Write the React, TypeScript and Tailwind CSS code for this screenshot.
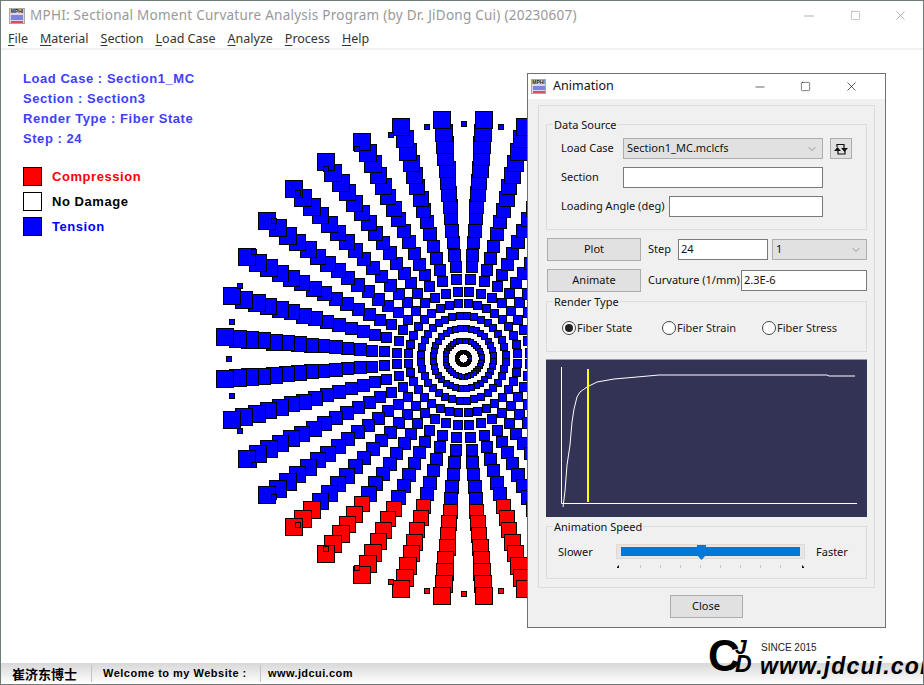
import { ChevronDown, Minus, Square, X } from 'lucide-react';

const CX = 462;
const CY = 357;

// fibers: 36 spokes, 19 rings and a center ring, plus the rebar circle
type Fiber = { x: number; y: number; s: number };

const buildFibers = () => {
  const list: Fiber[] = [];
  for (let a = 0; a < 36; a++) {
    const ang = ((a * 10 + 5) * Math.PI) / 180;
    list.push({ x: CX + 6.5 * Math.cos(ang), y: CY + 6.5 * Math.sin(ang), s: 3 });
  }
  for (let k = 0; k < 19; k++) {
    const r = 18 + 12.28 * k;
    for (let a = 0; a < 36; a++) {
      const ang = ((a * 10 + 5) * Math.PI) / 180;
      list.push({ x: CX + r * Math.cos(ang), y: CY + r * Math.sin(ang), s: 1.13 * Math.sqrt(r) });
    }
  }
  for (let a = 0; a < 40; a++) {
    const ang = (a * 9 * Math.PI) / 180;
    list.push({ x: CX + 235 * Math.cos(ang), y: CY + 235 * Math.sin(ang), s: 4.5 });
  }
  return list;
};

const fibers = buildFibers();

const FiberPlot = () => (
  <svg className="absolute left-0 top-0" width="924" height="685" shapeRendering="crispEdges">
    {fibers.map((f, i) => (
      <rect
        key={i}
        x={Math.round(f.x - f.s / 2) + 0.5}
        y={Math.round(f.y - f.s / 2) + 0.5}
        width={Math.round(f.s)}
        height={Math.round(f.s)}
        fill={f.y > 500 ? '#ff0000' : '#0000ff'}
        stroke="#000"
        strokeWidth="1"
      />
    ))}
  </svg>
);

const AppIcon = ({ size }: { size: 'lg' | 'sm' }) => (
  <div
    className={`flex flex-col items-center border border-[#a8a8a8] bg-[#d8d8e8] ${
      size === 'lg' ? 'h-[16px] w-[16px]' : 'h-[15px] w-[15px]'
    }`}
  >
    <span className="h-[5px] text-[5px] font-bold leading-[5px] text-[#222] [font-family:'Liberation_Sans',sans-serif]">MPHI</span>
    <div className="mt-[1px] h-[5px] w-[12px] bg-[#7a86d8]" />
    <div className="mt-[1px] h-[2px] w-[12px] bg-[#d85060]" />
  </div>
);

const MenuItem = ({ first, rest }: { first: string; rest: string }) => (
  <span>
    <span className="underline underline-offset-2">{first}</span>
    {rest}
  </span>
);

const LegendRow = ({ box, color, label }: { box: string; color: string; label: string }) => (
  <div className="flex h-[25px] items-center gap-[10px]">
    <div className={`h-[19px] w-[19px] border border-black ${box}`} />
    <span className={`text-[13px] font-bold tracking-[0.55px] ${color}`}>{label}</span>
  </div>
);

const Group = ({ title, className, children }: { title: string; className: string; children: React.ReactNode }) => (
  <div className={`relative border border-[#dcdcdc] ${className}`}>
    <span className="absolute left-[6px] top-[-8px] bg-[#f0f0f0] px-[1px] text-[11px] leading-[15px] text-[#111]">{title}</span>
    {children}
  </div>
);

const Field = ({ value, className }: { value?: string; className: string }) => (
  <div className={`flex items-center border border-[#7a7a7a] bg-white pl-[2px] text-[11px] text-[#111] ${className}`}>{value}</div>
);

const Select = ({ value, className }: { value: string; className: string }) => (
  <div className={`flex items-center justify-between border border-[#adadad] bg-[#e1e1e1] pl-[3px] pr-[4px] text-[11px] text-[#111] ${className}`}>
    <span>{value}</span>
    <ChevronDown size={12} strokeWidth={1} className="text-[#444]" />
  </div>
);

const Btn = ({ label, className }: { label: string; className: string }) => (
  <div className={`flex items-center justify-center border border-[#adadad] bg-[#e1e1e1] text-[11px] text-[#111] ${className}`}>{label}</div>
);

const Radio = ({ label, on, className }: { label: string; on?: boolean; className: string }) => (
  <div className={`flex items-center gap-[1px] text-[11px] text-[#222] ${className}`}>
    <div className="flex h-[14px] w-[14px] items-center justify-center rounded-full border border-[#444] bg-white">
      {on && <div className="h-[8px] w-[8px] rounded-full bg-[#222]" />}
    </div>
    <span>{label}</span>
  </div>
);

const CURVE =
  '36,97 38,81 40,55 43,35 45,12 47,-1 50,-13 53,-18 60,-23 70,-28 87,-31 110,-33 132,-35 300,-35 302,-34 328,-34';

const Curve = () => (
  <div className="h-[158px] w-[321px] border-t border-[#9a9a9a] border-b-white bg-[#333355]">
    <svg width="321" height="157" viewBox="0 0 321 157">
      <path d="M15.5 7V143.5H311" fill="none" stroke="#fff" strokeWidth="1" />
      <g transform="translate(-19 50)">
        <polyline points={CURVE} fill="none" stroke="#fff" strokeWidth="1" />
      </g>
      <rect x="41" y="9" width="2" height="133" fill="#ffff00" />
    </svg>
  </div>
);

const SpeedSlider = () => (
  <div className="flex w-[189px] flex-col">
    <div className="relative flex h-[15px] items-center justify-center border border-[#dcdcdc] bg-[#e6e6e6]">
      <div className="h-[9px] w-[179px] bg-[#0078d7]" />
      <svg className="absolute left-[79px] top-[0px]" width="11" height="15">
        <path d="M1 0H10V10L5.5 15L1 10Z" fill="#0078d7" />
      </svg>
    </div>
    <svg className="mt-[5px]" width="189" height="5">
      <path d="M1 3L3 1V4H1Z" fill="#111" />
      <path d="M186 1L188 3V4H186Z" fill="#111" />
      {[24, 44, 64, 84, 104, 124, 144, 164].map(x => (
        <rect key={x} x={x} y="1" width="1" height="3" fill="#c4c4c4" />
      ))}
    </svg>
  </div>
);

const RefreshIcon = () => (
  <svg width="16" height="16" viewBox="0 0 16 16">
    <path d="M4 6V3.5H11V8" fill="none" stroke="#111" strokeWidth="1.2" />
    <path d="M8 7H15L11.5 11Z" fill="#111" />
    <path d="M12 10V13H5V9" fill="none" stroke="#111" strokeWidth="1.2" />
    <path d="M1 10H8L4.5 6Z" fill="#111" />
  </svg>
);

const AnimationDialog = () => (
  <div className="absolute left-[526px] top-[72px] flex h-[555px] w-[359px] flex-col border border-[#707070] bg-[#f0f0f0] [font-family:'Noto_Sans',sans-serif]">
    <div className="flex h-[25px] shrink-0 items-center bg-white pl-[3px]">
      <AppIcon size="sm" />
      <span className="ml-[7px] text-[12.5px] text-[#111]">Animation</span>
      <Minus size={14} strokeWidth={1} className="ml-[139px] text-black" />
      <Square size={11} strokeWidth={1.1} className="ml-[33px] text-black" />
      <X size={15} strokeWidth={1} className="ml-[33px] text-black" />
    </div>

    <div className="mx-[10px] mt-[6px] flex h-[483px] flex-col border border-[#dcdcdc] px-[7px] pt-[18px]">
      <Group title="Data Source" className="flex h-[106px] flex-col gap-[8px] pt-[13px]">
        <div className="flex h-[21px] items-center">
          <span className="ml-[14px] w-[62px] text-[11px] text-[#111]">Load Case</span>
          <Select value="Section1_MC.mclcfs" className="h-[21px] w-[200px]" />
          <div className="ml-[7px] flex h-[21px] w-[22px] items-center justify-center border border-[#adadad] bg-[#e1e1e1]">
            <RefreshIcon />
          </div>
        </div>
        <div className="flex h-[21px] items-center">
          <span className="ml-[14px] w-[62px] text-[11px] text-[#111]">Section</span>
          <Field className="h-[21px] w-[200px]" />
        </div>
        <div className="flex h-[21px] items-center">
          <span className="ml-[14px] w-[108px] text-[11px] text-[#111]">Loading Angle (deg)</span>
          <Field className="h-[21px] w-[154px]" />
        </div>
      </Group>

      <div className="mt-[8px] flex h-[23px] items-center">
        <Btn label="Plot" className="ml-[1px] h-[23px] w-[94px]" />
        <span className="ml-[7px] w-[30px] text-[11px] text-[#111]">Step</span>
        <Field value="24" className="h-[21px] w-[90px]" />
        <Select value="1" className="ml-[4px] h-[21px] w-[95px]" />
      </div>
      <div className="mt-[8px] flex h-[23px] items-center">
        <Btn label="Animate" className="ml-[1px] h-[23px] w-[94px]" />
        <span className="ml-[7px] w-[93px] text-[11px] text-[#111]">Curvature (1/mm)</span>
        <Field value="2.3E-6" className="h-[21px] w-[126px]" />
      </div>

      <Group title="Render Type" className="mt-[9px] flex h-[51px] items-center pt-[3px]">
        <Radio label="Fiber State" on className="ml-[15px] w-[100px]" />
        <Radio label="Fiber Strain" className="w-[100px]" />
        <Radio label="Fiber Stress" className="w-[100px]" />
      </Group>

      <div className="mt-[7px]">
        <Curve />
      </div>

      <Group title="Animation Speed" className="mt-[9px] flex h-[53px] items-start pt-[17px]">
        <span className="ml-[11px] w-[58px] text-[11px] leading-[15px] text-[#111]">Slower</span>
        <SpeedSlider />
        <span className="ml-[11px] text-[11px] leading-[15px] text-[#111]">Faster</span>
      </Group>
    </div>

    <div className="mt-[7px] flex justify-center pr-[1px]">
      <Btn label="Close" className="h-[23px] w-[73px]" />
    </div>
  </div>
);

const Logo = () => (
  <div className="absolute left-[707px] top-[636px] h-[46px] w-[216px] font-bold text-black [font-family:'Liberation_Sans',sans-serif]">
    <span className="absolute left-[0px] top-[-3px] text-[44px] leading-[44px]">C</span>
    <span className="absolute left-[27px] top-[-2px] text-[21px] italic leading-[24px]">J</span>
    <span className="absolute left-[27px] top-[15px] text-[23px] italic leading-[24px]">D</span>
    <span className="absolute left-[53px] top-[5px] text-[10px] font-normal leading-[12px] text-[#222]">SINCE 2015</span>
    <span className="absolute left-[52px] top-[16px] text-[23px] italic leading-[26px] tracking-[1.15px]">www.jdcui.com</span>
  </div>
);

const App = () => (
  <div className="relative flex h-[685px] w-[924px] flex-col overflow-hidden border border-[#707a7a] bg-white [font-family:'Noto_Sans',sans-serif]">
    <div className="flex h-[29px] shrink-0 items-center pl-[8px]">
      <AppIcon size="lg" />
      <span className="ml-[5px] text-[13.5px] tracking-[0.25px] text-[#999]">
        MPHI: Sectional Moment Curvature Analysis Program (by Dr. JiDong Cui) (20230607)
      </span>
      <Minus size={16} strokeWidth={1} className="ml-auto text-[#888]" />
      <Square size={11} strokeWidth={1.1} className="ml-[33px] text-[#888]" />
      <X size={15} strokeWidth={1} className="ml-[32px] mr-[15px] text-[#888]" />
    </div>

    <div className="flex h-[20px] shrink-0 items-center gap-[12px] border-b-2 border-[#f0f0f0] pl-[7px] text-[12.5px] text-[#333]">
      <MenuItem first="F" rest="ile" />
      <MenuItem first="M" rest="aterial" />
      <MenuItem first="S" rest="ection" />
      <MenuItem first="L" rest="oad Case" />
      <MenuItem first="A" rest="nalyze" />
      <MenuItem first="P" rest="rocess" />
      <MenuItem first="H" rest="elp" />
    </div>

    <div className="relative flex-1 pl-[22px] pt-[19px] [font-family:'Liberation_Sans',sans-serif]">
      <div className="flex flex-col text-[13px] font-bold leading-[20px] tracking-[0.55px] text-[#4040ff]">
        <span>Load Case : Section1_MC</span>
        <span>Section : Section3</span>
        <span>Render Type : Fiber State</span>
        <span>Step : 24</span>
      </div>
      <div className="mt-[15px] flex flex-col">
        <LegendRow box="bg-[#ff0000]" color="text-[#ff0000]" label="Compression" />
        <LegendRow box="bg-white" color="text-black" label="No Damage" />
        <LegendRow box="bg-[#0000ff]" color="text-[#0000ff]" label="Tension" />
      </div>
    </div>

    <div className="flex h-[21px] shrink-0 items-center bg-gradient-to-b from-[#d8d8d8] to-white text-black [font-family:'Liberation_Sans',sans-serif]">
      <span className="ml-[11px] w-[79px] text-[13px] font-bold [font-family:'Noto_Sans_CJK_SC',sans-serif]">崔济东博士</span>
      <div className="h-[17px] w-px bg-[#c4c4c4]" />
      <span className="ml-[11px] w-[157px] text-[11px] font-bold tracking-[0.5px]">Welcome to my Website :</span>
      <div className="h-[17px] w-px bg-[#c4c4c4]" />
      <span className="ml-[7px] text-[11px] font-bold tracking-[0.4px]">www.jdcui.com</span>
    </div>

    <FiberPlot />
    <AnimationDialog />
    <Logo />
  </div>
);

export default App;
